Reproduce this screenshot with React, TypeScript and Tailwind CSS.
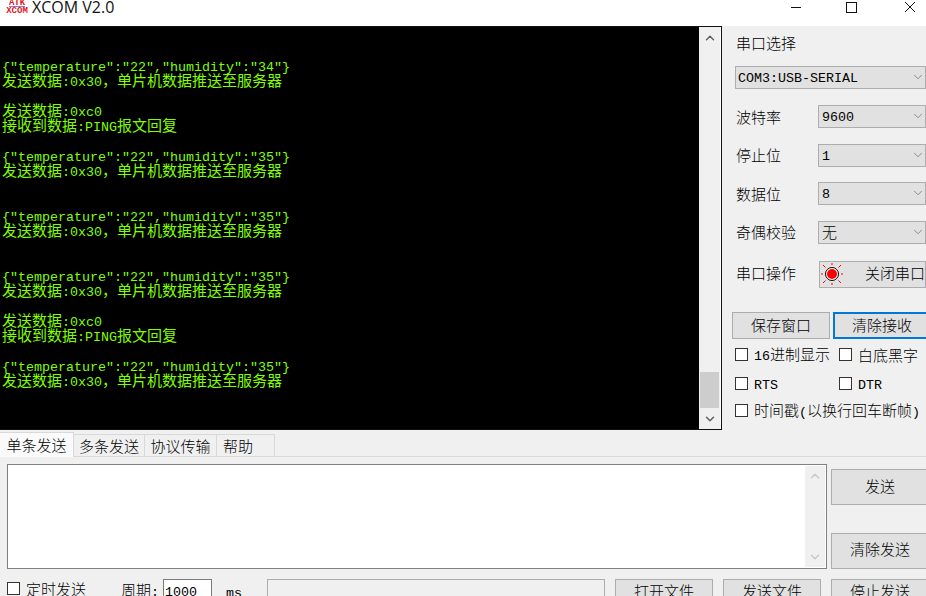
import { ReactNode } from 'react';
import { ChevronDown, ChevronUp } from 'lucide-react';

// the original font is half-width latin next to full-width hanzi, so split into runs
function Mono({ text }: { text: string }) {
  const runs = text.match(/[\x20-\x7e]+|[^\x20-\x7e]+/g) || [];
  return (
    <>
      {runs.map((run, i) =>
        /^[\x20-\x7e]/.test(run) ? (
          <span key={i} className="font-['Liberation_Mono',monospace] text-[13.33px]">{run}</span>
        ) : (
          <span key={i} className="font-['Noto_Sans_CJK_SC',sans-serif] text-[15px] font-light">{run}</span>
        )
      )}
    </>
  );
}

const sentData = '发送数据:0x30，单片机数据推送至服务器';
const lines = [
  '',
  '',
  '{"temperature":"22","humidity":"34"}',
  sentData,
  '',
  '发送数据:0xc0',
  '接收到数据:PING报文回复',
  '',
  '{"temperature":"22","humidity":"35"}',
  sentData,
  '',
  '',
  '{"temperature":"22","humidity":"35"}',
  sentData,
  '',
  '',
  '{"temperature":"22","humidity":"35"}',
  sentData,
  '',
  '发送数据:0xc0',
  '接收到数据:PING报文回复',
  '',
  '{"temperature":"22","humidity":"35"}',
  sentData,
];

function Select({ value, className }: { value: string; className: string }) {
  return (
    <div className={`flex h-[23px] shrink-0 items-center justify-between border border-[#adadad] bg-[#e1e1e1] pb-[1px] pl-[2px] ${className}`}>
      <span className="whitespace-pre text-black"><Mono text={value} /></span>
      <ChevronDown size={14} strokeWidth={1} className="text-[#505050]" />
    </div>
  );
}

function Row({ label, value }: { label: string; value: string }) {
  return (
    <div className="flex items-center justify-between">
      <span className="pb-[1px] pl-[4px] text-black"><Mono text={label} /></span>
      <Select value={value} className="w-[108px] pl-[3px]" />
    </div>
  );
}

function Check({ label, className }: { label: string; className?: string }) {
  return (
    <div className={`flex h-[14px] shrink-0 items-center gap-[6px] whitespace-pre text-black ${className || ''}`}>
      <span className="h-[13px] w-[13px] shrink-0 border border-[#333] bg-white" />
      <span><Mono text={label} /></span>
    </div>
  );
}

function Btn({ children, className }: { children: ReactNode; className: string }) {
  return (
    <div className={`flex shrink-0 items-center justify-center whitespace-pre border border-[#adadad] bg-[#e1e1e1] text-black ${className}`}>
      {children}
    </div>
  );
}

function Led() {
  return (
    <svg width="22" height="22" viewBox="0 0 22 22" className="shrink-0">
      <circle cx="11" cy="11" r="6.500" fill="#fff" stroke="#000" strokeWidth="1" />
      <circle cx="11" cy="11" r="5" fill="#f00" />
      <path d="M11 0v2M11 20v2M0 11h2M20 11h2M2 2l2.500 2.500M20 2l-2.500 2.500M2 20l2.500-2.500M20 20l-2.500-2.500" stroke="#f00" strokeWidth="1" />
    </svg>
  );
}

export default function App() {
  return (
    <div className="flex h-[596px] w-[926px] flex-col overflow-hidden bg-[#f0f0f0] font-['Noto_Sans_CJK_SC',sans-serif] leading-[15px]">
      {/* title bar */}
      <div className="flex h-[26px] shrink-0 items-start bg-white">
        <div className="ml-[6px] flex h-[16px] w-[22px] flex-col items-center justify-end overflow-hidden font-['Liberation_Mono',monospace] font-bold text-[#e01818]">
          <span className="border-b border-[#8080e0] text-[9px] leading-[6px]">ATK</span>
          <span className="text-[9px] leading-[9px]">XCOM</span>
        </div>
        <span className="ml-[4px] mt-[-3px] font-['Open_Sans',sans-serif] text-[16px] leading-[20px] text-[#111]">XCOM V2.0</span>
        <div className="ml-auto flex items-center pt-[1px]">
          <svg width="12" height="12" viewBox="0 0 12 12" className="mr-[44px]"><path d="M1 6.500h10" stroke="#111" /></svg>
          <svg width="12" height="12" viewBox="0 0 12 12" className="mr-[46px]"><rect x="0.500" y="1.500" width="10" height="10" fill="none" stroke="#111" /></svg>
          <svg width="12" height="12" viewBox="0 0 12 12" className="mr-[10px]"><path d="M1 1l10 10M11 1L1 11" stroke="#111" /></svg>
        </div>
      </div>

      {/* receive area + serial settings */}
      <div className="flex h-[404px] shrink-0">
        <div className="flex w-[722px] shrink-0 border-b border-r border-t border-[#111] bg-white">
          <div className="w-[699px] overflow-hidden bg-black leading-[15px] text-[#80ff00] [&_span]:font-normal">
            {lines.map((line, i) => (
              <div key={i} className="h-[15px] whitespace-pre pl-[2px]"><Mono text={line} /></div>
            ))}
          </div>
          <div className="flex w-[21px] flex-col bg-[#f0f0f0] pl-px">
            <div className="flex h-[22px] items-center justify-center">
              <ChevronUp size={14} strokeWidth={2.5} className="text-[#606060]" />
            </div>
            <div className="flex-1" />
            <div className="mr-px h-[36px] bg-[#cdcdcd]" />
            <div className="flex h-[21px] items-center justify-center">
              <ChevronDown size={14} strokeWidth={2.5} className="text-[#606060]" />
            </div>
          </div>
        </div>

        <div className="flex w-[204px] shrink-0 flex-col overflow-hidden pl-[10px] pt-[9px]">
          <div className="ml-[4px] h-[15px] leading-[15px] text-black"><Mono text="串口选择" /></div>
          <div className="mt-[16px] flex flex-col gap-[16px] pl-[3px]">
            <Select value="COM3:USB-SERIAL" className="w-[191px]" />
            <div className="-ml-[3px] flex flex-col gap-[15.500px]">
              <Row label="波特率" value="9600" />
              <Row label="停止位" value="1" />
              <Row label="数据位" value="8" />
              <Row label="奇偶校验" value="无" />
            </div>
          </div>
          <div className="mt-[17px] flex items-center justify-between">
            <span className="pb-[3px] pl-[4px] text-black"><Mono text="串口操作" /></span>
            <Btn className="h-[27px] w-[107px] !justify-start">
              <span className="ml-[1px]"><Led /></span>
              <span className="ml-[22px] pb-[3px]"><Mono text="关闭串口" /></span>
            </Btn>
          </div>
          <div className="mt-[24px] flex gap-[3px]">
            <Btn className="h-[27px] w-[98px] pb-[1px]"><Mono text="保存窗口" /></Btn>
            <Btn className="h-[27px] w-[98px] !border-2 !border-[#0078d7] pb-[1px]"><Mono text="清除接收" /></Btn>
          </div>
          <div className="mt-[9px] flex flex-col pl-[3px]">
            <div className="flex">
              <Check label="16进制显示" className="w-[104px]" />
              <Check label="白底黑字" />
            </div>
            <div className="mt-[15px] flex">
              <Check label="RTS" className="w-[104px]" />
              <Check label="DTR" />
            </div>
            <Check label="时间戳(以换行回车断帧)" className="mt-[13px]" />
          </div>
        </div>
      </div>

      {/* tabs */}
      <div className="flex h-[26px] shrink-0 items-end">
        <div className="z-10 -mb-px flex h-[25px] w-[74px] items-center justify-center border-r border-t border-[#d9d9d9] bg-[#fafafa] pb-[2px] text-black"><Mono text="单条发送" /></div>
        <div className="flex h-[22px] w-[71px] items-center justify-center border-r border-t border-[#d9d9d9] pb-[1px] text-black"><Mono text="多条发送" /></div>
        <div className="flex h-[22px] w-[72px] items-center justify-center border-r border-t border-[#d9d9d9] pb-[1px] text-black"><Mono text="协议传输" /></div>
        <div className="flex h-[22px] w-[58px] items-center border-r border-t border-[#d9d9d9] pb-[1px] pl-[6px] text-black"><Mono text="帮助" /></div>
      </div>

      {/* send area */}
      <div className="flex-1 border-t border-[#d9d9d9] pl-[7px] pt-[7px]">
        <div className="flex h-[105px] items-start">
          <div className="flex h-[105px] w-[820px] shrink-0 justify-end border border-[#808080] bg-white p-px">
            <div className="flex w-[20px] flex-col justify-between bg-[#f0f0f0] py-[3px]">
              <ChevronUp size={14} strokeWidth={2.5} className="mx-auto text-[#c8c8c8]" />
              <ChevronDown size={14} strokeWidth={2.5} className="mx-auto text-[#c8c8c8]" />
            </div>
          </div>
          <div className="ml-[4px] flex h-[105px] flex-col justify-between pt-[5px]">
            <Btn className="h-[36px] w-[98px] pb-[3px]"><Mono text="发送" /></Btn>
            <Btn className="h-[36px] w-[98px] pb-[6px]"><Mono text="清除发送" /></Btn>
          </div>
        </div>
        <div className="mt-[10px] flex items-start">
          <Check label="定时发送" className="mt-[2px] w-[114px]" />
          <span className="mt-[3px] shrink-0 whitespace-pre text-black"><Mono text="周期:" /></span>
          <div className="ml-[4px] h-[24px] w-[49px] shrink-0 border border-[#7a7a7a] bg-white pl-[1px] pt-[2px] text-black"><Mono text="1000" /></div>
          <span className="ml-[14px] mt-[4px] shrink-0 text-black"><Mono text="ms" /></span>
          <div className="ml-[25px] h-[24px] w-[338px] shrink-0 border border-[#adadad] bg-[#f0f0f0]" />
          <Btn className="ml-[10px] h-[24px] w-[98px] pb-[2px]"><Mono text="打开文件" /></Btn>
          <Btn className="ml-[10px] h-[24px] w-[98px] pb-[2px]"><Mono text="发送文件" /></Btn>
          <Btn className="ml-[10px] h-[24px] w-[98px] pb-[2px]"><Mono text="停止发送" /></Btn>
        </div>
      </div>
    </div>
  );
}
